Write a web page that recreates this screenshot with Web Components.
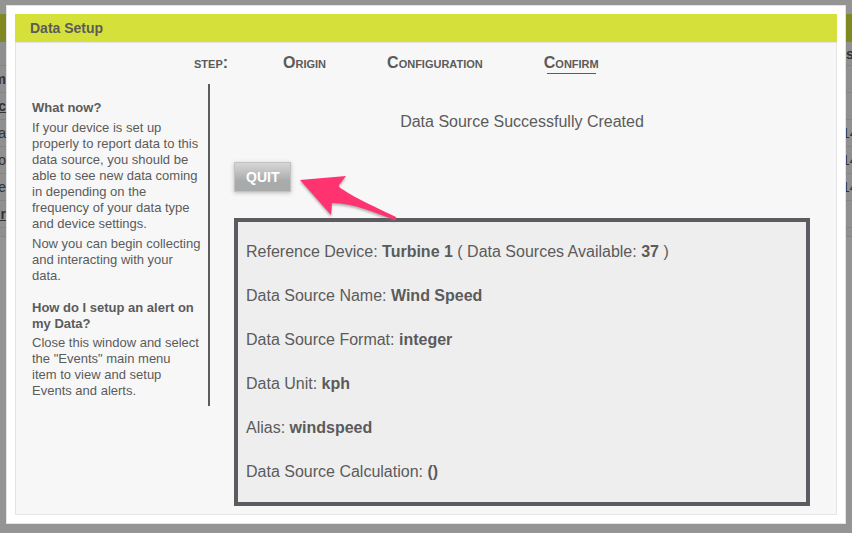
<!DOCTYPE html>
<html lang="en">
<head>
<meta charset="utf-8">
<title>Data Setup</title>
<style>
html, body { margin: 0; min-height: 100vh; }
body { display: grid; background: #949494; color: #5b5b5b; font-family: "Liberation Sans", Arial, sans-serif; font-size: 16px; overflow: hidden; }
</style>
</head>
<body>
<data-app></data-app>

<script>
const define = (name, html) => customElements.define(name, class extends HTMLElement {
  constructor() {
    super();
    const t = document.createElement('template');
    t.innerHTML = html;
    this.attachShadow({ mode: 'open' }).append(t.content.cloneNode(true));
  }
});

define('dimmed-row', `
<style>
:host { display: flex; justify-content: space-between; align-items: center; box-sizing: border-box; height: 27px; border-bottom: 1px solid #858585; color: #333; font-size: 14px; font-weight: bold; }
:host([plain]) { font-weight: normal; }
:host([head]) { height: 24px; }
:host([short]) { height: 9px; }
div { width: 6px; overflow: hidden; display: flex; white-space: nowrap; }
.start { justify-content: flex-end; }
:host([plain]) .end { text-indent: -4px; }
</style>
<div class="start"><slot name="start"></slot></div>
<div class="end"><slot name="end"></slot></div>`);

define('dimmed-page', `
<style>
:host { display: block; padding-top: 14px; }
.bar { height: 28px; background: #808822; }
.rows { background: #909090; }
.link { text-decoration: underline; }
</style>
<div class="bar"></div>
<div class="rows">
<dimmed-row head><b slot="end">s</b></dimmed-row>
<dimmed-row><b slot="start">m</b></dimmed-row>
<dimmed-row><b slot="start" class="link">kc</b></dimmed-row>
<dimmed-row plain><span slot="start">ca</span><span slot="end">14</span></dimmed-row>
<dimmed-row plain><span slot="start">o</span><span slot="end">14</span></dimmed-row>
<dimmed-row plain><span slot="start">Te</span><span slot="end">14</span></dimmed-row>
<dimmed-row><b slot="start" class="link">ur</b></dimmed-row>
<dimmed-row short></dimmed-row>
</div>`);

define('modal-window', `
<style>
:host { display: flex; flex-direction: column; box-sizing: border-box; margin: 5px 6px 9px; padding: 8px; background: #fff; border: 1px solid #e4e4e4; }
h1 { margin: 0; padding: 0 15px; font-size: 14px; line-height: 28px; color: #5b5b5b; background: #d5e13a; }
.content { flex: 1; background: #f7f7f7; border: 1px solid #e4e4e4; }
</style>
<h1><slot name="title"></slot></h1>
<div class="content"><slot></slot></div>`);

define('step-nav', `
<style>
:host { display: block; }
nav { display: flex; align-items: flex-start; gap: 61px; padding: 10px 16px 0 178px; font-weight: bold; font-variant: small-caps; line-height: 20px; }
</style>
<nav aria-label="Steps"><slot></slot></nav>`);

define('step-item', `
<style>
:host { display: block; white-space: nowrap; }
:host([lead]) { margin-right: -6px; }
:host([current])::after { content: ""; display: block; height: 1px; margin: 0 3px; background: #5b5b60; }
</style>
<slot></slot>`);

define('help-panel', `
<style>
:host { display: block; box-sizing: border-box; width: 194px; padding: 16px 6px 7px 16px; border-right: 2px solid #5b5b60; font-size: 13px; line-height: 16px; }
h2 { margin: 0 0 4px; font-size: 13px; line-height: 16px; }
p { margin: 0 0 4px; }
h2.next { margin: 16px 0 3px; }
p:last-child { margin: 0; }
</style>
<h2>What now?</h2>
<p>If your device is set up properly to report data to this data source, you should be able to see new data coming in depending on the frequency of your data type and device settings.</p>
<p>Now you can begin collecting and interacting with your data.</p>
<h2 class="next">How do I setup an alert on my Data?</h2>
<p>Close this window and select the "Events" main menu<br>item to view and setup<br>Events and alerts.</p>`);

define('quit-button', `
<style>
:host { display: inline-block; position: relative; }
button { display: block; height: 30px; margin: 0; padding: 0 11px; border: 1px solid #c2c2c2; background: linear-gradient(#d6d6d6, #a9abaa 65%, #a9abaa); color: #fff; font: bold 14px/28px "Liberation Sans", Arial, sans-serif; box-shadow: 0 1px 4px #bbb; }
svg { position: absolute; left: 62px; top: 10px; width: 104px; height: 52px; z-index: 1; filter: drop-shadow(0 2px 1px #7778); }
</style>
<button type="button"><slot></slot></button>
<svg viewBox="296 172 104 52" aria-hidden="true"><path fill="#ff336f" d="M300 180 L346 176 L339 185 Q338 187 342 189 C358 200 378 208 396 217 Q397 219 395 220 C375 213 354 203 332 203 L331 215 Z"/></svg>`);

define('detail-box', `
<style>
:host { display: grid; gap: 26px; box-sizing: border-box; padding: 21px 8px; border: 4px solid #5b5b60; background: #eee; line-height: 18px; }
</style>
<slot></slot>`);

define('data-app', `
<style>
:host { display: grid; min-width: 0; }
dimmed-page, modal-window { grid-area: 1 / 1; min-width: 0; }
modal-window { position: relative; }
.columns { display: flex; align-items: flex-start; gap: 24px; padding-top: 10px; }
main { flex: 1; min-width: 0; padding: 28px 26px 8px 0; }
.status { margin: 0 0 30px; text-align: center; line-height: 20px; }
quit-button { margin-bottom: 26px; vertical-align: top; }
p { margin: 0; }
</style>
<dimmed-page></dimmed-page>
<modal-window role="dialog" aria-label="Data Setup">
<span slot="title">Data Setup</span>
<step-nav>
<step-item lead>step:</step-item>
<step-item>Origin</step-item>
<step-item>Configuration</step-item>
<step-item current>Confirm</step-item>
</step-nav>
<div class="columns">
<help-panel></help-panel>
<main>
<p class="status">Data Source Successfully Created</p>
<quit-button>QUIT</quit-button>
<detail-box>
<p>Reference Device: <b>Turbine 1</b> ( Data Sources Available: <b>37</b> )</p>
<p>Data Source Name: <b>Wind Speed</b></p>
<p>Data Source Format: <b>integer</b></p>
<p>Data Unit: <b>kph</b></p>
<p>Alias: <b>windspeed</b></p>
<p>Data Source Calculation: <b>()</b></p>
</detail-box>
</main>
</div>
</modal-window>`);
</script>
</body>
</html>
